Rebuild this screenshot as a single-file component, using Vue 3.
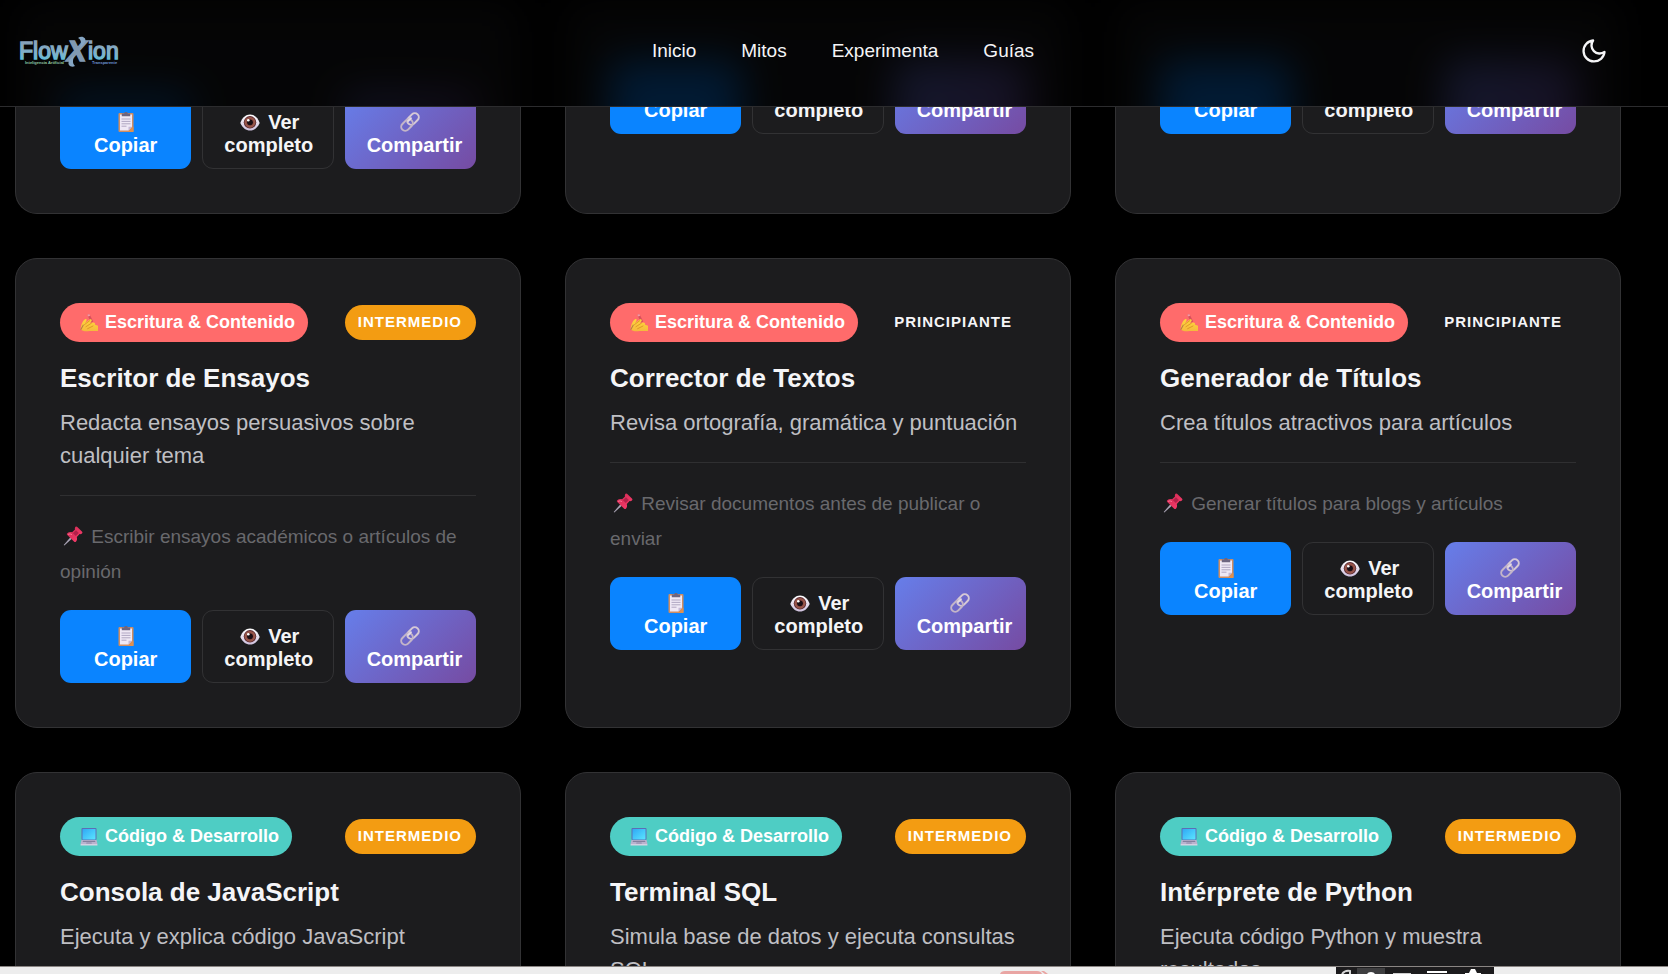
<template>
  <div class="page">
    <!-- shared icon shapes -->
    <svg class="sprite" aria-hidden="true">
      <defs>
        <linearGradient id="g-hand" x1="0" y1="0" x2="0" y2="1">
          <stop offset="0" stop-color="#ffd83b" />
          <stop offset="1" stop-color="#f5b83d" />
        </linearGradient>
        <linearGradient id="g-screen" x1="0" y1="0" x2="1" y2="1">
          <stop offset="0" stop-color="#2fa8f5" />
          <stop offset="1" stop-color="#5be6ff" />
        </linearGradient>
        <linearGradient id="g-pin" x1="0" y1="0" x2="1" y2="1">
          <stop offset="0" stop-color="#c8284f" />
          <stop offset="1" stop-color="#ff3f70" />
        </linearGradient>
        <linearGradient id="g-white" x1="0" y1="0" x2="0" y2="1">
          <stop offset="0" stop-color="#ffffff" />
          <stop offset="1" stop-color="#cdbfdc" />
        </linearGradient>
        <radialGradient id="g-iris">
          <stop offset="0" stop-color="#6b2a34" />
          <stop offset="1" stop-color="#a2604f" />
        </radialGradient>
      </defs>
      <symbol id="icon-writing" viewBox="0 0 18 18">
        <path d="M7.2.8 9.4 0l3.800 7.500-2 1.200z" fill="#d7505c" />
        <path d="M7.200.8 9.400 0l.8 1.700-2.100.8z" fill="#f39aa5" />
        <path d="M.6 15.200C.9 11 2.600 6.600 5 5.200c1.400-.7 2.200.4 1.500 1.500L5 9.300l4.400-3.600c1.600-1.100 3 .1 2 1.500L9.800 9.100l3.500-.5c1.500 0 2.100 1.100 1.800 2.100l2.900 1.100V17H9.400c-3.200.6-7 .3-8.800-1.800z" fill="url(#g-hand)" />
        <path d="m4.500 10.600 5.300-4M5.900 12.700l5.500-3.500M7.600 14.700l5.400-2.700" stroke="#d98a26" stroke-width=".8" fill="none" stroke-linecap="round" />
        <path d="M.2 15.500 3 10.400l.9.6-2.700 5z" fill="#b87a4a" />
      </symbol>
      <symbol id="icon-laptop" viewBox="0 0 18 18">
        <rect x="1.500" y="0" width="15" height="12" rx="1" fill="#5b6fb5" />
        <rect x="2.500" y="1" width="13" height="10.500" fill="url(#g-screen)" />
        <path d="M1.500 12h15l1 4H.5z" fill="#b9b3cf" />
        <path d="M3 12.800h12l.4 1.200H2.600z" fill="#85809f" />
        <path d="M6.500 14.400h5l.4 1.200H6.100z" fill="#8d88a8" />
        <rect x=".5" y="16" width="17" height="1.600" rx=".6" fill="#d5cfe2" />
      </symbol>
      <symbol id="icon-pin" viewBox="0 0 20 20">
        <path d="M7.400 11.300 8.800 12.700 1.400 19.500.7 18.900z" fill="#a9a3b5" />
        <path d="M12.400 1c.7-.7 1.300-.6 1.900 0l4.600 4.600c.7.6.7 1.300 0 1.900-.7.6-1.500.8-2.300.5l-2.800 2.900c.6 1.900.2 3.600-.9 4.800-.6.6-1.200.5-1.700 0L4.300 8.900c-.6-.6-.6-1.200 0-1.700C5.600 6.100 7.300 5.700 9.100 6.300L12 3.400c-.3-.8-.2-1.700.4-2.400z" fill="url(#g-pin)" />
        <path d="m10 7.200 3-3 2.800 2.800-3 3z" fill="#b3204a" />
        <path d="m5.400 8.300c1.200-.6 2.300-.5 3.300.2" stroke="#ff7b9b" stroke-width=".9" fill="none" stroke-linecap="round" />
      </symbol>
      <symbol id="icon-clipboard" viewBox="0 0 20 20">
        <rect x="2.500" y="1" width="15" height="19" rx="1" fill="#cf8d62" />
        <path d="M4 2.500h12v12.300L12.500 18.500H4z" fill="#efe8f5" />
        <path d="M16 14.800 12.500 18.500v-3.700z" fill="#c4b7d6" />
        <path d="M17.500 14.500V20H12z" fill="#e0904d" />
        <path d="M5.800 1.400h2.400C8.300.4 9 0 10 0s1.700.4 1.800 1.400h2.400V4.200H5.800z" fill="#6d6580" />
        <path d="M5.500 7h9M5.500 9.400h9M5.500 11.800h9M5.500 14.200h5" stroke="#a99fbc" stroke-width=".9" />
      </symbol>
      <symbol id="icon-eye" viewBox="0 0 20 20">
        <path d="M.3 11C2.300 5.400 5.800 2.500 10 2.500s7.700 2.900 9.700 8.500c-2.300 5-5.700 7.500-9.700 7.500S2.600 16 .3 11z" fill="url(#g-white)" />
        <circle cx="10" cy="10.300" r="6.200" fill="#5a2730" />
        <circle cx="10" cy="10.300" r="5.400" fill="url(#g-iris)" />
        <circle cx="10" cy="10.300" r="2.900" fill="#190d14" />
        <circle cx="8.300" cy="8.300" r="1.300" fill="#fff" />
      </symbol>
      <symbol id="icon-link" viewBox="0 0 20 20">
        <g fill="none" stroke-linecap="round">
          <rect x="-6.500" y="-4" width="13" height="8" rx="4" transform="translate(13 7) rotate(-45)" stroke="#d6c9d6" stroke-width="2" />
          <rect x="-6.500" y="-4" width="13" height="8" rx="4" transform="translate(7 13) rotate(-45)" stroke="#c3b5c8" stroke-width="2" />
          <path d="m8.300 8.900 2.600-2.600" stroke="#e4dae4" stroke-width="2" />
        </g>
      </symbol>
    </svg>

    <header class="navbar">
      <!-- glow of the row that passes behind the bar -->
      <div class="glow" aria-hidden="true">
        <div v-for="n in 3" :key="n" class="glow-card" :class="{ low: n === 1 }">
          <span class="copy"></span>
          <span></span>
          <span class="share"></span>
        </div>
      </div>
      <a href="#" class="logo" aria-label="FlowXion">
        <svg width="104" height="34" viewBox="0 0 104 34">
          <defs>
            <linearGradient id="g-logo" x1="0" y1="0" x2="0" y2="1">
              <stop offset="0" stop-color="#8b9cb5" />
              <stop offset=".6" stop-color="#7fb2cb" />
              <stop offset="1" stop-color="#4fc5e0" />
            </linearGradient>
          </defs>
          <g class="logo-word" fill="url(#g-logo)" stroke="url(#g-logo)">
            <text x="4" y="25">Flow</text>
            <text x="73" y="25">ion</text>
          </g>
          <text class="logo-x" x="52" y="27" fill="#8199b2" stroke="#8199b2">X</text>
          <path d="M63 4c4-3 9 0 7 4-1 2-3 4-5 6 1-4 2-8-2-10zM60 32c-4 2-8-1-6-5 1-2 2-3 5-5-1 4-2 7 1 10z" fill="#86a6c4" />
          <text class="logo-tag" x="10" y="30" fill="#8fc7a5">Inteligencia Artificial</text>
          <text class="logo-tag" x="77" y="30" fill="#6f93d6">Transparente</text>
        </svg>
      </a>
      <nav class="nav-links">
        <a v-for="link in links" :key="link" href="#">{{ link }}</a>
      </nav>
      <button class="theme-btn" type="button" aria-label="Cambiar tema">
        <svg width="28" height="28" viewBox="0 0 24 24" fill="none" stroke="currentColor" stroke-width="2" stroke-linecap="round" stroke-linejoin="round">
          <path d="M21 12.790A9 9 0 1 1 11.210 3 7 7 0 0 0 21 12.790z" />
        </svg>
      </button>
    </header>

    <main class="grid">
      <article v-for="(card, i) in cards" :key="i" class="card" :class="card.layout">
        <template v-if="card.title">
          <div class="card-top">
            <span class="category" :class="card.category">
              <svg width="18" height="18"><use :href="'#' + categories[card.category].icon" /></svg>
              {{ categories[card.category].label }}
            </span>
            <span class="level" :class="card.level">{{ card.level }}</span>
          </div>
          <h3>{{ card.title }}</h3>
          <p class="desc">{{ card.desc }}</p>
        </template>
        <p v-if="card.usage" class="usage">
          <svg class="inline-icon" width="20" height="20"><use href="#icon-pin" /></svg>
          {{ card.usage }}
        </p>
        <div v-if="card.actions" class="actions">
          <button v-for="a in actions" :key="a.label" type="button" class="btn" :class="a.kind">
            <svg class="inline-icon" width="20" height="20"><use :href="'#' + a.icon" /></svg>
            {{ a.label }}
          </button>
        </div>
      </article>
    </main>

    <footer class="bottom-bar">
      <svg width="50" height="4" viewBox="0 0 50 4">
        <path d="M0 4Q1 1 5 1h32q4 0 5 3zM41 1h3l4 3h-3z" fill="#e9a5a3" />
      </svg>
      <svg width="158" height="7" viewBox="0 0 158 7">
        <rect width="158" height="7" fill="#1c1b1d" />
        <rect x="21" y="1" width="28" height="6" fill="#3e3e40" />
        <path d="M6 7q3-4 8-3v3" fill="none" stroke="#d6d6d6" stroke-width="2" />
        <path d="M31 7q1-2 4-2t4 2z" fill="#fff" />
        <rect x="57" y="6" width="18" height="1" fill="#ccc" />
        <rect x="91" y="4" width="20" height="2" fill="#fff" />
        <path d="M129 7v-1h4l2-4h4l2 4h4v1z" fill="#fff" />
      </svg>
    </footer>
  </div>
</template>

<script setup>
const links = ['Inicio', 'Mitos', 'Experimenta', 'Guías']

const categories = {
  writing: { label: 'Escritura & Contenido', icon: 'icon-writing' },
  code: { label: 'Código & Desarrollo', icon: 'icon-laptop' },
}

const actions = [
  { label: 'Copiar', kind: 'copy', icon: 'icon-clipboard' },
  { label: 'Ver completo', kind: 'view', icon: 'icon-eye' },
  { label: 'Compartir', kind: 'share', icon: 'icon-link' },
]

const cards = [
  // first row, mostly scrolled under the navbar
  { layout: 'cut', actions: true },
  { layout: 'cut short', actions: true },
  { layout: 'cut short', actions: true },
  {
    category: 'writing',
    level: 'intermedio',
    title: 'Escritor de Ensayos',
    desc: 'Redacta ensayos persuasivos sobre cualquier tema',
    usage: 'Escribir ensayos académicos o artículos de opinión',
    actions: true,
  },
  {
    category: 'writing',
    level: 'principiante',
    title: 'Corrector de Textos',
    desc: 'Revisa ortografía, gramática y puntuación',
    usage: 'Revisar documentos antes de publicar o enviar',
    actions: true,
  },
  {
    category: 'writing',
    level: 'principiante',
    title: 'Generador de Títulos',
    desc: 'Crea títulos atractivos para artículos',
    usage: 'Generar títulos para blogs y artículos',
    actions: true,
  },
  {
    category: 'code',
    level: 'intermedio',
    title: 'Consola de JavaScript',
    desc: 'Ejecuta y explica código JavaScript',
  },
  {
    category: 'code',
    level: 'intermedio',
    title: 'Terminal SQL',
    desc: 'Simula base de datos y ejecuta consultas SQL',
  },
  {
    category: 'code',
    level: 'intermedio',
    title: 'Intérprete de Python',
    desc: 'Ejecuta código Python y muestra resultados',
  },
]
</script>

<style>
body {
  background: #000;
}
</style>

<style scoped>
.page {
  height: 100vh;
  overflow: hidden;
  background: #000;
  color: #f5f5f7;
  font-family: 'Liberation Sans', Arial, sans-serif;
}

.page * {
  box-sizing: border-box;
}

.sprite {
  position: absolute;
  width: 0;
  height: 0;
}

.navbar {
  position: fixed;
  top: 0;
  left: 0;
  right: 0;
  z-index: 10;
  display: flex;
  align-items: center;
  justify-content: space-between;
  padding: 22px 47px 26px 15px;
  overflow: hidden;
  background: #000;
  border-bottom: 1px solid #2c2c2e;
}

.glow {
  position: absolute;
  inset: 0 0 -60px;
  z-index: -1;
  display: grid;
  grid-template-columns: repeat(3, minmax(0, 1fr));
  gap: 44px;
  padding: 0 47px 0 15px;
  opacity: 0.2;
  filter: blur(20px);
}

.glow-card {
  display: grid;
  grid-template-columns: repeat(3, minmax(0, 1fr));
  gap: 11px;
  padding: 61px 45px 10px;
  background: #1c1c1e;
}

.glow-card.low {
  padding: 96px 45px 48px;
}

.glow .copy {
  background: #0a84ff;
}

.glow .share {
  background: linear-gradient(135deg, #667eea, #764ba2);
}

.logo svg {
  display: block;
}

.logo-word {
  font-size: 23px;
  stroke-width: 1.4;
}

.logo-x {
  font-size: 29px;
  font-weight: bold;
  font-style: italic;
  stroke-width: 1.5;
}

.logo-tag {
  font-size: 4px;
  font-weight: bold;
}

.nav-links {
  display: flex;
  gap: 45px;
}

.nav-links a {
  color: #f5f5f7;
  font-size: 19px;
  line-height: 22px;
  text-decoration: none;
}

.theme-btn {
  display: flex;
  padding: 15px 13px;
  border: none;
  background: none;
  color: #f5f5f7;
  cursor: pointer;
}

.grid {
  display: grid;
  grid-template-columns: repeat(3, minmax(0, 1fr));
  gap: 44px;
  padding: 0 47px 0 15px;
}

.card {
  padding: 44px;
  background: #1c1c1e;
  border: 1px solid #323234;
  border-radius: 22px;
}

.card.cut {
  padding-top: 96px;
  border-top: none;
  border-radius: 0 0 22px 22px;
}

.card.short {
  padding-top: 61px;
}

.card-top {
  display: flex;
  align-items: center;
  justify-content: space-between;
  margin-bottom: 20px;
}

.category {
  display: flex;
  align-items: center;
  gap: 7px;
  padding: 0 13px 0 20px;
  border-radius: 22px;
  color: #fff;
  font-size: 18px;
  font-weight: bold;
  line-height: 39px;
}

.category.writing {
  background: #ff6b6b;
}

.category.code {
  background: #4ecdc4;
}

.level {
  padding: 0 14px 2px 13px;
  border-radius: 22px;
  font-size: 15px;
  font-weight: bold;
  line-height: 33px;
  letter-spacing: 1px;
  text-transform: uppercase;
}

.level.intermedio {
  background: #f39c12;
  color: #fff;
}

h3 {
  margin: 0 0 12px;
  font-size: 26px;
  line-height: 32px;
}

.desc {
  margin: 0;
  color: #bfbfc3;
  font-size: 22px;
  line-height: 33px;
}

.usage {
  margin: 23px 0 21px;
  padding-top: 23px;
  border-top: 1px solid #2f2f31;
  color: #69696d;
  font-size: 19px;
  line-height: 35px;
}

.inline-icon {
  margin: 0 3px;
  vertical-align: -3px;
}

.actions {
  display: grid;
  grid-template-columns: repeat(3, minmax(0, 1fr));
  gap: 11px;
}

.btn {
  padding: 14px 21px 11px;
  border: 1px solid transparent;
  border-radius: 11px;
  background-origin: border-box;
  color: #fff;
  font-family: inherit;
  font-size: 20px;
  font-weight: bold;
  line-height: 23px;
  cursor: pointer;
}

.btn.copy {
  background-color: #0a84ff;
}

.btn.view {
  background-color: transparent;
  border-color: #323234;
  color: #f5f5f7;
}

.btn.share {
  background-image: linear-gradient(135deg, #667eea, #764ba2);
}

.bottom-bar {
  position: fixed;
  left: 0;
  right: 0;
  bottom: 0;
  z-index: 10;
  display: flex;
  align-items: flex-end;
  justify-content: flex-end;
  gap: 286px;
  padding-right: 174px;
  background: #ededed;
  box-shadow: 0 -1px 0 #8a8583;
}
</style>
